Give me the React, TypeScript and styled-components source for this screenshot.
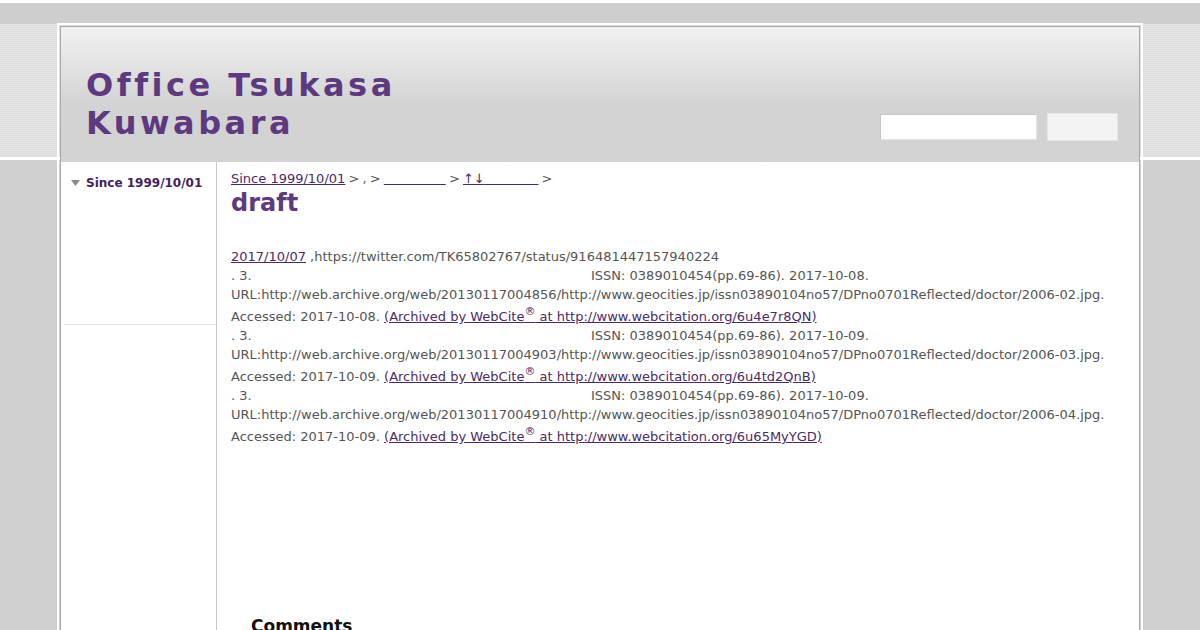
import styled, { createGlobalStyle } from "styled-components"

const GlobalStyle = createGlobalStyle`
	html, body {
		margin: 0;
		padding: 0;
	}
	body {
		font-family: "DejaVu Sans", Verdana, sans-serif;
		background:
			repeating-linear-gradient(to bottom, rgba(255, 255, 255, 0.22) 0 1px, transparent 1px 2px) 0 24px / 100% 133px no-repeat,
			linear-gradient(to bottom, #fff 0 3px, #cecece 3px 24px, #dcdcdc 24px 157px, #fff 157px 160px, #d0d0d0 160px);
		background-color: #d0d0d0;
	}
`

const Frame = styled.div`
	box-sizing: border-box;
	width: 1086px;
	margin: 23px auto 0;
	border: 2px solid #fff;
	border-bottom: none;
	padding: 1px 1px 0;
`

const Inner = styled.div`
	border: 1px solid #a9a9a9;
	border-bottom: none;
	background: #fff;
`

const Header = styled.header`
	height: 135px;
	box-sizing: border-box;
	display: flex;
	justify-content: space-between;
	align-items: flex-end;
	padding: 39px 21px 21px 25px;
	background: linear-gradient(to bottom, #f1f1f1 0, #e2e2e2 40px, #d3d3d3 78px, #d2d2d2 100%);
`

const SiteTitle = styled.h1`
	margin: 0;
	align-self: flex-start;
	width: 420px;
	font-size: 32px;
	line-height: 38px;
	font-weight: bold;
	letter-spacing: 3.5px;
	color: #5d3a80;
`

const SearchForm = styled.form`
	display: flex;
	align-items: center;
	gap: 10px;
`

const SearchInput = styled.input`
	box-sizing: border-box;
	width: 157px;
	height: 26px;
	margin: 0;
	background: #fff;
	border: 1px solid #c6c6c6;
	border-right-color: #e4e4e4;
	border-bottom-color: #e4e4e4;
`

const SearchButton = styled.button`
	box-sizing: border-box;
	width: 71px;
	height: 28px;
	margin: 0;
	background: #f3f3f3;
	border: 1px solid #e6e6e6;
`

const Body = styled.div`
	display: flex;
	min-height: 480px;
`

const Sidebar = styled.aside`
	width: 155px;
	flex-shrink: 0;
	border-right: 1px solid #c8c8c8;
`

const SideBlock = styled.div`
	box-sizing: border-box;
	height: 163px;
	margin-left: 3px;
	padding: 13px 0 0 7px;
	border-bottom: 1px solid #e2e2e2;
`

const SideItem = styled.a`
	display: flex;
	align-items: center;
	gap: 6px;
	font-size: 12px;
	line-height: 16px;
	font-weight: bold;
	color: #43225f;
	text-decoration: none;
`

const Caret = styled.svg`
	width: 9px;
	height: 6px;
	fill: #8a8a8a;
`

const Main = styled.main`
	flex: 1;
	padding: 8px 14px 0;
	font-size: 13px;
	color: #555;
`

const Crumbs = styled.div`
	line-height: 18px;
	white-space: pre;
	word-spacing: -1px;
`

const Link = styled.a`
	color: #4a2b68;
	text-decoration: underline;
	word-spacing: 0;
`

const PageTitle = styled.h2`
	margin: 1px 0 30px;
	font-size: 24px;
	line-height: 28px;
	font-weight: bold;
	color: #5d3a80;
`

const Entry = styled.div`
	line-height: 19px;
`

const Line = styled.div<{ $raised?: boolean }>`
	white-space: nowrap;
	padding-top: ${(p) => (p.$raised ? "3px" : "0")};
`

const Lead = styled.span`
	display: inline-block;
	width: 360px;
`

const Sup = styled.sup`
	font-size: 11px;
	line-height: 0;
	vertical-align: 6px;
`

const Comments = styled.h3`
	margin: 169px 0 0 20px;
	font-size: 17px;
	line-height: 22px;
	font-weight: bold;
	color: #111;
`

const blank = (n: number) => "\u00a0".repeat(n)

interface Citation {
	issn: string
	stamp: string
	file: string
	accessed: string
	code: string
}

const citations: Citation[] = [
	{ issn: "2017-10-08.", stamp: "20130117004856", file: "2006-02.jpg.", accessed: "2017-10-08.", code: "6u4e7r8QN" },
	{ issn: "2017-10-09.", stamp: "20130117004903", file: "2006-03.jpg.", accessed: "2017-10-09.", code: "6u4td2QnB" },
	{ issn: "2017-10-09.", stamp: "20130117004910", file: "2006-04.jpg.", accessed: "2017-10-09.", code: "6u65MyYGD" }
]

const CitationBlock = ({ c }: { c: Citation }) => (
	<>
		<Line>
			<Lead>. 3.</Lead>ISSN: 0389010454(pp.69-86). {c.issn}
		</Line>
		<Line>
			URL:http://web.archive.org/web/{c.stamp}/http://www.geocities.jp/issn03890104no57/DPno0701Reflected/doctor/{c.file}
		</Line>
		<Line $raised>
			Accessed: {c.accessed}{" "}
			<Link href="#">
				(Archived by WebCite<Sup>®</Sup> at http://www.webcitation.org/{c.code})
			</Link>
		</Line>
	</>
)

const App = () => (
	<>
		<GlobalStyle />
		<Frame>
			<Inner>
				<Header>
					<SiteTitle>Office Tsukasa Kuwabara</SiteTitle>
					<SearchForm onSubmit={(e) => e.preventDefault()}>
						<SearchInput type="text" />
						<SearchButton type="submit" />
					</SearchForm>
				</Header>
				<Body>
					<Sidebar>
						<SideBlock>
							<SideItem href="#">
								<Caret viewBox="0 0 9 6">
									<path d="M0 0h9L4.5 6z" />
								</Caret>
								Since 1999/10/01
							</SideItem>
						</SideBlock>
					</Sidebar>
					<Main>
						<Crumbs>
							<Link href="#">Since 1999/10/01</Link> &gt; , &gt; <Link href="#">{blank(15)}</Link> &gt;{" "}
							<Link href="#">↑↓{blank(13)}</Link> &gt;
						</Crumbs>
						<PageTitle>draft</PageTitle>
						<Entry>
							<Line>
								<Link href="#">2017/10/07</Link> ,https://twitter.com/TK65802767/status/916481447157940224
							</Line>
							{citations.map((c) => (
								<CitationBlock key={c.code} c={c} />
							))}
						</Entry>
						<Comments>Comments</Comments>
					</Main>
				</Body>
			</Inner>
		</Frame>
	</>
)

export default App
